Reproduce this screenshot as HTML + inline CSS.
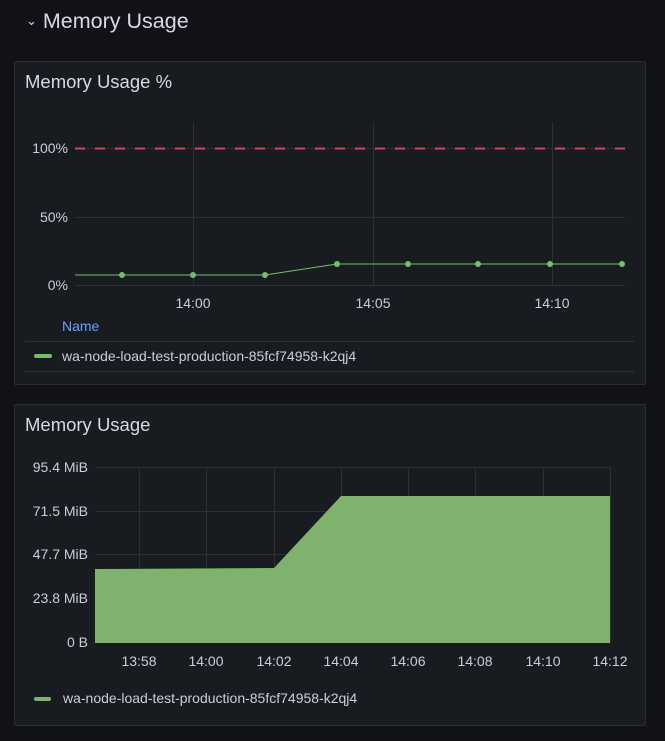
<!DOCTYPE html>
<html><head><style>
html,body{margin:0;padding:0;background:#111217;width:665px;height:741px;overflow:hidden;font-family:"Liberation Sans",sans-serif;}
.panel{position:absolute;left:14px;width:630px;background:#181b1f;border:1px solid #2c2e33;border-radius:2px;}
.t{position:absolute;color:#ccccdc;}
</style></head><body>
<div class="t" style="left:26px;top:9px;font-size:21.5px;color:#d8d9e4"><span style="font-size:13px;position:relative;top:-3px">&#8964;</span>&nbsp;Memory Usage</div>
<div class="panel" style="top:61px;height:322px"></div>
<div class="panel" style="top:404px;height:320px"></div>
<div class="t" style="left:25px;top:71px;font-size:18.5px;color:#d8d9e4">Memory Usage %</div>
<div class="t" style="left:25px;top:414px;font-size:18.5px;color:#d8d9e4">Memory Usage</div>
<svg width="665" height="741" style="position:absolute;left:0;top:0" font-family="Liberation Sans, sans-serif" font-size="14" fill="#ccccdc">
<g stroke="#2d2f34" stroke-width="1">
<line x1="75" y1="148.5" x2="625" y2="148.5"/><line x1="75" y1="217.5" x2="625" y2="217.5"/><line x1="75" y1="285.5" x2="625" y2="285.5"/>
<line x1="193.5" y1="122" x2="193.5" y2="285"/><line x1="373.5" y1="122" x2="373.5" y2="285"/><line x1="552.5" y1="122" x2="552.5" y2="285"/>
</g>
<line x1="75" y1="148.5" x2="625" y2="148.5" stroke="#f2495c" stroke-width="2" stroke-dasharray="10,10" opacity="0.85"/>
<g text-anchor="end"><text x="68" y="153">100%</text><text x="68" y="222">50%</text><text x="68" y="290">0%</text></g>
<g text-anchor="middle"><text x="193" y="308">14:00</text><text x="373" y="308">14:05</text><text x="552" y="308">14:10</text></g>
<polyline points="75,275 122,275 193,275 265,275 337,264 408,264 478,264 550,264 622,264" fill="none" stroke="#73bf69" stroke-width="1"/>
<g fill="#73bf69"><circle cx="122" cy="275" r="3"/><circle cx="193" cy="275" r="3"/><circle cx="265" cy="275" r="3"/><circle cx="337" cy="264" r="3"/><circle cx="408" cy="264" r="3"/><circle cx="478" cy="264" r="3"/><circle cx="550" cy="264" r="3"/><circle cx="622" cy="264" r="3"/></g>
<text x="62" y="331" fill="#6e9fff" font-size="14">Name</text>
<line x1="25" y1="341.5" x2="634" y2="341.5" stroke="#2d2f34"/>
<line x1="25" y1="371.5" x2="634" y2="371.5" stroke="#2d2f34"/>
<rect x="34" y="354" width="18" height="4" rx="2" fill="#73bf69"/>
<text x="62" y="361">wa-node-load-test-production-85fcf74958-k2qj4</text>
<g stroke="#2d2f34">
<line x1="95" y1="467.5" x2="610" y2="467.5"/><line x1="95" y1="511.5" x2="610" y2="511.5"/><line x1="95" y1="554.5" x2="610" y2="554.5"/><line x1="95" y1="598.5" x2="610" y2="598.5"/>
<line x1="139.5" y1="467" x2="139.5" y2="643"/><line x1="206.5" y1="467" x2="206.5" y2="643"/><line x1="274.5" y1="467" x2="274.5" y2="643"/><line x1="341.5" y1="467" x2="341.5" y2="643"/><line x1="408.5" y1="467" x2="408.5" y2="643"/><line x1="475.5" y1="467" x2="475.5" y2="643"/><line x1="543.5" y1="467" x2="543.5" y2="643"/><line x1="610.5" y1="467" x2="610.5" y2="643"/>
</g>
<polygon points="95,569 274,568 341,496 610,496 610,643 95,643" fill="#7eb26d"/>
<g text-anchor="end"><text x="88" y="472">95.4 MiB</text><text x="88" y="516">71.5 MiB</text><text x="88" y="559">47.7 MiB</text><text x="88" y="603">23.8 MiB</text><text x="88" y="647">0 B</text></g>
<g text-anchor="middle"><text x="139" y="666">13:58</text><text x="206" y="666">14:00</text><text x="274" y="666">14:02</text><text x="341" y="666">14:04</text><text x="408" y="666">14:06</text><text x="475" y="666">14:08</text><text x="543" y="666">14:10</text><text x="610" y="666">14:12</text></g>
<rect x="34" y="697" width="17" height="4" rx="2" fill="#7eb26d"/>
<text x="63" y="703">wa-node-load-test-production-85fcf74958-k2qj4</text>
</svg>
</body></html>
